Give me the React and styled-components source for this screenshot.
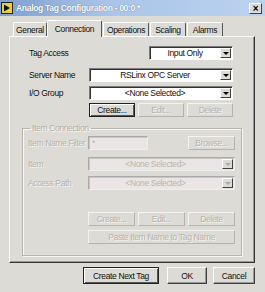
import styled, { createGlobalStyle } from "styled-components";

const GlobalStyle = createGlobalStyle`
  html, body {
    margin: 0;
    padding: 0;
    background: #dddbd5;
  }
  * {
    box-sizing: border-box;
  }
`;

const Window = styled.div`
  width: 265px;
  height: 292px;
  background: #dddbd5;
  font-family: "Liberation Sans", Arial, sans-serif;
  font-size: 8.5px;
  letter-spacing: -0.35px;
  color: #111;
  display: flex;
  flex-direction: column;
  overflow: hidden;
`;

const TitleBar = styled.div`
  height: 16px;
  display: flex;
  align-items: center;
  padding: 0 3px 0 1px;
  gap: 3px;
  background: linear-gradient(to right, #7f9fce, #a9c4e8 40%, #bcd3f0);
  color: #fff;
  font-weight: bold;
  font-size: 8.5px;
  letter-spacing: -0.3px;
  text-shadow: 0 0 1px #3b5a8a;
`;

const Title = styled.span`
  flex: 1;
  white-space: nowrap;
`;

const CloseBox = styled.div`
  width: 13px;
  height: 11px;
  background: #dddbd5;
  border: 1px solid;
  border-color: #fff #404040 #404040 #fff;
  color: #000;
  font-size: 10px;
  line-height: 9px;
  text-align: center;
  text-shadow: none;
`;

const Tabs = styled.div`
  display: flex;
  align-items: flex-end;
  margin: 4px 0 0 13px;
  height: 16px;
`;

const Tab = styled.div`
  width: ${(p) => p.$w}px;
  height: ${(p) => (p.$active ? "17px" : "14px")};
  margin-bottom: ${(p) => (p.$active ? "-1px" : "0")};
  display: flex;
  align-items: center;
  justify-content: center;
  border: 1px solid;
  border-bottom: none;
  border-color: #fff #555 #555 #fff;
  border-radius: 2px 2px 0 0;
  background: #dddbd5;
  position: relative;
  z-index: ${(p) => (p.$active ? 2 : 1)};
  margin-right: ${(p) => (p.$gap ? "1px" : "0")};
`;

const Panel = styled.div`
  margin: 0 10px 0 9px;
  height: 227px;
  border: 1px solid;
  border-color: #fff #333 #333 #fff;
  box-shadow: inset -1px -1px 0 #999;
  padding: 9px 21px 0 19px;
  display: flex;
  flex-direction: column;
`;

const Row = styled.div`
  display: flex;
  align-items: center;
  height: 14px;
  margin-top: ${(p) => p.$mt || 0}px;
`;

const Label = styled.span`
  width: 60px;
  flex: none;
  color: ${(p) => (p.$disabled ? "#b7b3ab" : "#111")};
  text-shadow: ${(p) => (p.$disabled ? "1px 1px 0 #f6f5f2" : "none")};
  white-space: nowrap;
`;

const Combo = styled.div`
  width: ${(p) => (p.$w ? p.$w + "px" : "auto")};
  flex: ${(p) => (p.$w ? "none" : "1")};
  margin-left: ${(p) => (p.$auto ? "auto" : "0")};
  height: 14px;
  display: flex;
  background: ${(p) => (p.$disabled ? "#ebe5e5" : "#fff")};
  border: 1px solid;
  border-color: ${(p) =>
    p.$disabled ? "#aaa #eee #eee #aaa" : "#7a7a7a #fff #fff #7a7a7a"};
  box-shadow: inset 1px 1px 0 ${(p) => (p.$disabled ? "#c9c6c0" : "#333")};
`;

const ComboText = styled.span`
  flex: 1;
  text-align: center;
  line-height: 12px;
  color: ${(p) => (p.$disabled ? "#b9b5ae" : "#111")};
`;

const Arrow = styled.div`
  width: 11px;
  margin: 1px 1px 1px 0;
  background: #dddbd5;
  border: 1px solid;
  border-color: #fff #404040 #404040 #fff;
  display: flex;
  align-items: center;
  justify-content: center;
  &::after {
    content: "";
    border-left: 3px solid transparent;
    border-right: 3px solid transparent;
    border-top: 3px solid ${(p) => (p.$disabled ? "#aaa" : "#000")};
  }
`;

const Button = styled.div`
  width: ${(p) => (p.$w ? p.$w + "px" : "auto")};
  flex: ${(p) => (p.$w ? "none" : "1")};
  height: ${(p) => p.$h || 14}px;
  display: flex;
  align-items: center;
  justify-content: center;
  background: #dddbd5;
  border: 1px solid;
  border-color: ${(p) =>
    p.$default
      ? "#222"
      : p.$disabled
      ? "#f4f3f0 #b6b3ad #b6b3ad #f4f3f0"
      : "#fff #404040 #404040 #fff"};
  box-shadow: ${(p) =>
    p.$default
      ? "inset 1px 1px 0 #fff, inset -1px -1px 0 #555"
      : p.$disabled
      ? "none"
      : "inset -1px -1px 0 #999"};
  color: ${(p) => (p.$disabled ? "#b7b3ab" : "#111")};
  text-shadow: ${(p) => (p.$disabled ? "1px 1px 0 #f6f5f2" : "none")};
  white-space: nowrap;
`;

const ButtonRow = styled.div`
  display: flex;
  gap: 3px;
  margin-left: 60px;
  margin-top: ${(p) => p.$mt || 0}px;
  & > * {
    flex: 1;
  }
`;

const Group = styled.fieldset`
  margin: 7px -9px 0 -7px;
  padding: 0 6px 0 5px;
  height: 132px;
  border: 1px solid #b9b6af;
  box-shadow: inset 1px 1px 0 #f7f6f3, 1px 1px 0 #f7f6f3;
  display: flex;
  flex-direction: column;
`;

const Legend = styled.legend`
  padding: 0 2px;
  margin-left: 2px;
  color: #b2aea6;
  text-shadow: 1px 1px 0 #f6f5f2;
  line-height: 9px;
`;

const TextBox = styled.div`
  width: 60px;
  height: 14px;
  background: #ebe5e5;
  border: 1px solid;
  border-color: #aaa #eee #eee #aaa;
  box-shadow: inset 1px 1px 0 #c9c6c0;
  color: #b7b3ab;
  padding-left: 3px;
  line-height: 12px;
`;

const Footer = styled.div`
  display: flex;
  justify-content: flex-end;
  align-items: center;
  gap: 6px;
  padding: 4px 10px 0 0;
  & > :nth-child(2) {
    margin-left: 2px;
  }
`;

const AppIcon = () => (
  <svg width="12" height="12" viewBox="0 0 12 12">
    <rect x="0.5" y="0.5" width="11" height="11" fill="#e8d23a" stroke="#222" />
    <path d="M3 2.5 L9 6 L3 9.5 Z" fill="#111" />
  </svg>
);

const tabs = [
  { name: "General", w: 34 },
  { name: "Connection", w: 55, active: true },
  { name: "Operations", w: 46 },
  { name: "Scaling", w: 36 },
  { name: "Alarms", w: 36 },
];

const App = () => {
  return (
    <>
      <GlobalStyle />
      <Window>
        <TitleBar>
          <AppIcon />
          <Title>Analog Tag Configuration - 00:0 *</Title>
          <CloseBox>×</CloseBox>
        </TitleBar>
        <Tabs>
          {tabs.map((t, i) => (
            <Tab key={t.name} $w={t.w} $active={t.active} $gap={i > 0 && i < 4}>
              {t.name}
            </Tab>
          ))}
        </Tabs>
        <Panel>
          <Row>
            <Label>Tag Access</Label>
            <Combo $w={84} $auto>
              <ComboText>Input Only</ComboText>
              <Arrow />
            </Combo>
          </Row>
          <Row $mt={8}>
            <Label>Server Name</Label>
            <Combo>
              <ComboText>RSLinx OPC Server</ComboText>
              <Arrow />
            </Combo>
          </Row>
          <Row $mt={4}>
            <Label>I/O Group</Label>
            <Combo>
              <ComboText>&lt;None Selected&gt;</ComboText>
              <Arrow />
            </Combo>
          </Row>
          <ButtonRow $mt={3}>
            <Button $default>Create...</Button>
            <Button $disabled>Edit...</Button>
            <Button $disabled>Delete</Button>
          </ButtonRow>
          <Group>
            <Legend>Item Connection</Legend>
            <Row $mt={3}>
              <Label $disabled>Item Name Filter</Label>
              <TextBox>*</TextBox>
              <Button $disabled $w={47} style={{ marginLeft: "auto" }}>
                Browse...
              </Button>
            </Row>
            <Row $mt={7}>
              <Label $disabled>Item</Label>
              <Combo $disabled>
                <ComboText $disabled>&lt;None Selected&gt;</ComboText>
                <Arrow $disabled />
              </Combo>
            </Row>
            <Row $mt={5}>
              <Label $disabled>Access Path</Label>
              <Combo $disabled>
                <ComboText $disabled>&lt;None Selected&gt;</ComboText>
                <Arrow $disabled />
              </Combo>
            </Row>
            <ButtonRow $mt={22}>
              <Button $disabled>Create...</Button>
              <Button $disabled>Edit...</Button>
              <Button $disabled>Delete</Button>
            </ButtonRow>
            <ButtonRow $mt={4}>
              <Button $disabled>Paste Item Name to Tag Name</Button>
            </ButtonRow>
          </Group>
        </Panel>
        <Footer>
          <Button $default $w={76} $h={17}>Create Next Tag</Button>
          <Button $w={40} $h={17}>OK</Button>
          <Button $w={42} $h={17}>Cancel</Button>
        </Footer>
      </Window>
    </>
  );
};

export default App;
